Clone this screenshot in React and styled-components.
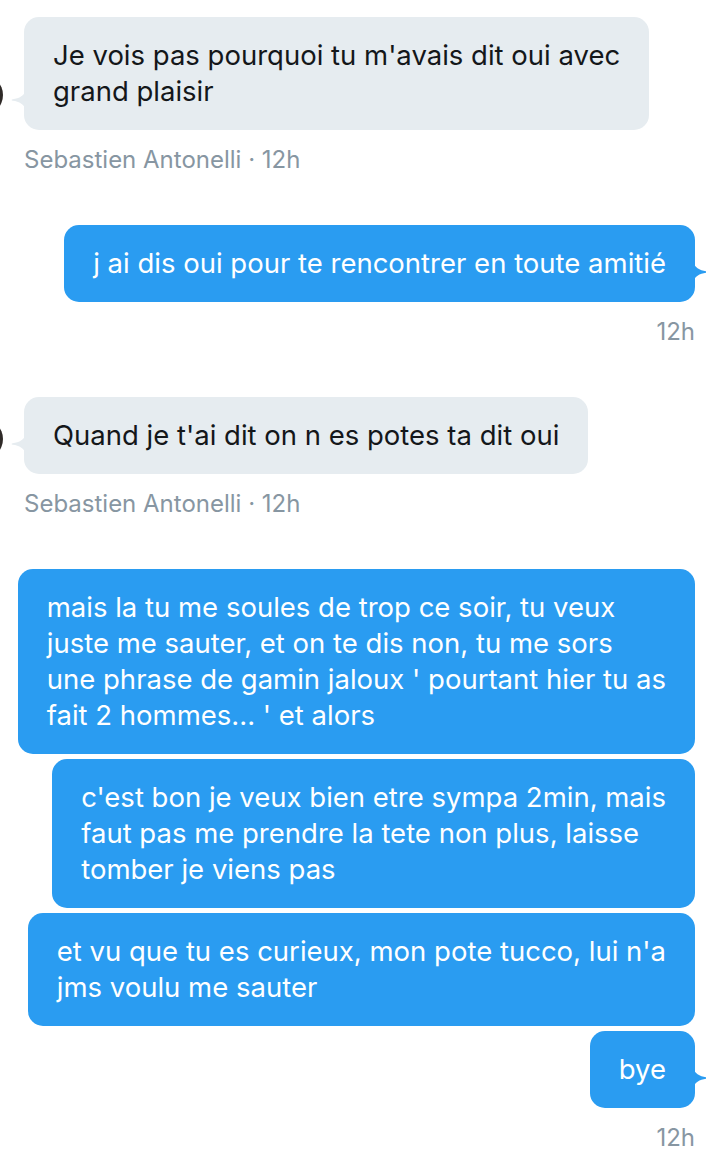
import styled, { createGlobalStyle } from "styled-components";

const GlobalStyle = createGlobalStyle`
  body {
    margin: 0;
    background: #ffffff;
    font-family: "Inter", "Liberation Sans", sans-serif;
  }
`;

const conversation = [
  {
    from: "them",
    meta: "Sebastien Antonelli · 12h",
    bubbles: [["Je vois pas pourquoi tu m'avais dit oui avec", "grand plaisir"]],
  },
  {
    from: "me",
    meta: "12h",
    bubbles: [["j ai dis oui pour te rencontrer en toute amitié"]],
  },
  {
    from: "them",
    meta: "Sebastien Antonelli · 12h",
    bubbles: [["Quand je t'ai dit on n es potes ta dit oui"]],
  },
  {
    from: "me",
    meta: "12h",
    bubbles: [
      [
        "mais la tu me soules de trop ce soir, tu veux",
        "juste me sauter, et on te dis non, tu me sors",
        "une phrase de gamin jaloux ' pourtant hier tu as",
        "fait 2 hommes... ' et alors",
      ],
      [
        "c'est bon je veux bien etre sympa 2min, mais",
        "faut pas me prendre la tete non plus, laisse",
        "tomber je viens pas",
      ],
      ["et vu que tu es curieux, mon pote tucco, lui n'a", "jms voulu me sauter"],
      ["bye"],
    ],
  },
];

const Tail = ({ side }) => (
  <TailSvg $side={side} viewBox="0 0 15 22" width="15" height="22">
    {side === "left" ? (
      <path d="M15 0 C14 6.5 8 9.5 1.8 10.2 C0.2 10.5 0.2 11.5 1.8 11.8 C8 12.5 14 15.5 15 22 Z" />
    ) : (
      <path d="M0 0 C1 6.5 7 9.5 13.2 10.2 C14.8 10.5 14.8 11.5 13.2 11.8 C7 12.5 1 15.5 0 22 Z" />
    )}
  </TailSvg>
);

const App = () => {
  return (
    <>
      <GlobalStyle />
      <Thread>
        {conversation.map((group, gi) => (
          <Group key={gi} $mine={group.from === "me"}>
            {group.bubbles.map((lines, bi) => {
              const last = bi === group.bubbles.length - 1;
              return (
                <Row key={bi} $mine={group.from === "me"}>
                  {group.from === "them" && <Avatar />}
                  <Bubble $mine={group.from === "me"}>
                    {lines.map((line, li) => (
                      <Line key={li}>{line}</Line>
                    ))}
                    {last && <Tail side={group.from === "me" ? "right" : "left"} />}
                  </Bubble>
                </Row>
              );
            })}
            <Meta $mine={group.from === "me"}>{group.meta}</Meta>
          </Group>
        ))}
      </Thread>
    </>
  );
};

const Thread = styled.div`
  display: flex;
  flex-direction: column;
  gap: 52px;
  padding: 17px 11px 0 24px;
  overflow: hidden;
  min-height: 1154px;
  box-sizing: border-box;
`;

const Group = styled.div`
  display: flex;
  flex-direction: column;
  align-items: ${(p) => (p.$mine ? "flex-end" : "flex-start")};
  gap: 5px;
`;

const Row = styled.div`
  display: flex;
  align-items: flex-end;
  justify-content: ${(p) => (p.$mine ? "flex-end" : "flex-start")};
`;

const Avatar = styled.div`
  width: 40px;
  height: 40px;
  border-radius: 50%;
  background: #2f2a28;
  margin: 0 21px 15px -61px;
  flex-shrink: 0;
`;

const Bubble = styled.div`
  position: relative;
  padding: 20px 29px 21px;
  border-radius: 15px;
  background: ${(p) => (p.$mine ? "#2a9cf1" : "#e6ecf0")};
  color: ${(p) => (p.$mine ? "#ffffff" : "#14171a")};
  font-size: 27.5px;
  line-height: 36px;
  fill: ${(p) => (p.$mine ? "#2a9cf1" : "#e6ecf0")};
`;

const Line = styled.span`
  display: block;
  white-space: nowrap;
`;

const TailSvg = styled.svg`
  position: absolute;
  bottom: 19px;
  ${(p) => (p.$side === "left" ? "left: -13px;" : "right: -13px;")}
`;

const Meta = styled.div`
  margin-top: 12px;
  font-size: 24px;
  line-height: 26px;
  color: #8796a2;
`;

export default App;
